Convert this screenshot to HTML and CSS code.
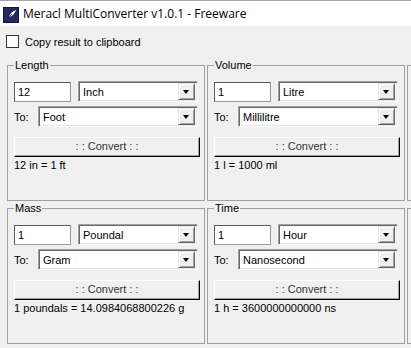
FILE: index.html
```html
<!DOCTYPE html>
<html lang="en">

<head>
	<meta charset="utf-8" />
	<title>Meracl MultiConverter v1.0.1 - Freeware</title>
	<link rel="stylesheet" href="styles.css">
</head>

<body>
	<div class="titlebar">
		<svg class="appicon" viewBox="0 0 16 16" width="16" height="16">
			<rect x="0.5" y="0.5" width="15" height="15" fill="#1f2d5c" stroke="#0d1533"></rect>
			<path d="M3 13 L6 10 C7 6 10 4 13 3 C12 6 10 9 6 10" fill="#ffffff"></path>
			<path d="M3 13 L9 7" stroke="#1f2d5c" stroke-width="0.8"></path>
		</svg>
		<span>Meracl MultiConverter v1.0.1 - Freeware</span>
	</div>
	<div class="window">
		<div class="check"><span class="checkbox"></span>Copy result to clipboard</div>
		<div class="groups">
			<fieldset class="group">
				<legend>Length</legend>
				<div class="row">
					<div class="textbox">12</div>
					<div class="combo from"><span class="value">Inch</span><span class="drop"></span></div>
				</div>
				<div class="row">
					<span class="to">To:</span>
					<div class="combo target"><span class="value">Foot</span><span class="drop"></span></div>
				</div>
				<div class="button">: : Convert : :</div>
				<div class="result">12 in = 1 ft</div>
			</fieldset>
			<fieldset class="group">
				<legend>Volume</legend>
				<div class="row">
					<div class="textbox">1</div>
					<div class="combo from"><span class="value">Litre</span><span class="drop"></span></div>
				</div>
				<div class="row">
					<span class="to">To:</span>
					<div class="combo target"><span class="value">Millilitre</span><span class="drop"></span></div>
				</div>
				<div class="button">: : Convert : :</div>
				<div class="result">1 l = 1000 ml</div>
			</fieldset>
			<!-- next column, cut off by the window edge -->
			<div class="group edge"></div>
			<fieldset class="group">
				<legend>Mass</legend>
				<div class="row">
					<div class="textbox">1</div>
					<div class="combo from"><span class="value">Poundal</span><span class="drop"></span></div>
				</div>
				<div class="row">
					<span class="to">To:</span>
					<div class="combo target"><span class="value">Gram</span><span class="drop"></span></div>
				</div>
				<div class="button">: : Convert : :</div>
				<div class="result">1 poundals = 14.0984068800226 g</div>
			</fieldset>
			<fieldset class="group">
				<legend>Time</legend>
				<div class="row">
					<div class="textbox">1</div>
					<div class="combo from"><span class="value">Hour</span><span class="drop"></span></div>
				</div>
				<div class="row">
					<span class="to">To:</span>
					<div class="combo target"><span class="value">Nanosecond</span><span class="drop"></span></div>
				</div>
				<div class="button">: : Convert : :</div>
				<div class="result">1 h = 3600000000000 ns</div>
			</fieldset>
			<div class="group edge"></div>
		</div>
	</div>
</body>

</html>
```

FILE: styles.css
```css
body {
	margin: 0;
	background-color: #f0f0f0;
	font-family: 'Liberation Sans', Arial, sans-serif;
	font-size: 11px;
	color: #000;
	overflow: hidden;
}

.titlebar {
	height: 25px;
	background-color: #fff;
	border-top: 1px solid #a8a8a8;
	display: flex;
	align-items: center;
	gap: 4px;
	padding-left: 3px;
	font-family: 'Open Sans', 'Noto Sans', sans-serif;
	font-size: 12px;
}

.appicon {
	flex: none;
	margin-top: 2px;
}

.window {
	padding: 9px 0 0 6px;
}

.check {
	display: flex;
	align-items: center;
	gap: 6px;
	height: 13px;
}

.checkbox {
	width: 11px;
	height: 11px;
	border: 1px solid #333;
	background-color: #fff;
}

.groups {
	display: grid;
	grid-template-columns: 198px 198px 1fr;
	grid-template-rows: 142px 142px;
	column-gap: 2px;
	row-gap: 1px;
	margin: 11px 0 0 1px;
}

.group {
	margin: 0;
	padding: 9px 4px 0 6px;
	border: 1px solid #a0a0a0;
	min-width: 0;
}

.group.edge {
	margin-top: 6px;
	padding: 0;
	border-right: none;
}

.group legend {
	padding: 0 1px;
	line-height: 13px;
}

.row {
	display: flex;
	align-items: center;
	height: 21px;
	margin-bottom: 4px;
}

.textbox {
	box-sizing: border-box;
	width: 57px;
	height: 20px;
	margin-right: 7px;
	padding: 2px 0 0 3px;
	background-color: #fff;
	border: 1px solid;
	border-color: #5a5a5a #9a9a9a #9a9a9a #5a5a5a;
	line-height: 14px;
}

.combo {
	box-sizing: border-box;
	height: 21px;
	display: flex;
	align-items: center;
	background-color: #fff;
	border: 1px solid;
	border-color: #a0a0a0 #fff #fff #a0a0a0;
	box-shadow: inset 1px 1px #696969, inset -1px -1px #e3e3e3;
	padding: 2px;
}

.combo.from {
	width: 120px;
}

.combo.target {
	width: 160px;
}

.to {
	width: 24px;
}

.value {
	flex: 1;
	padding-left: 2px;
}

.drop {
	flex: none;
	position: relative;
	box-sizing: border-box;
	width: 17px;
	height: 17px;
	background-color: #f0f0f0;
	border: 1px solid;
	border-color: #e3e3e3 #696969 #696969 #e3e3e3;
	box-shadow: inset 1px 1px #fff, inset -1px -1px #a0a0a0;
}

.drop::after {
	content: "";
	position: absolute;
	left: 4px;
	top: 6px;
	border-left: 3.5px solid transparent;
	border-right: 3.5px solid transparent;
	border-top: 4px solid #000;
}

.button {
	box-sizing: border-box;
	width: 186px;
	height: 20px;
	margin-top: 10px;
	background-color: #f0f0f0;
	border: 1px solid;
	border-color: #fff #000 #000 #fff;
	box-shadow: inset -1px -1px #a0a0a0;
	text-align: center;
	line-height: 17px;
	color: #333;
}

.result {
	line-height: 13px;
	margin-top: 2px;
}
```
